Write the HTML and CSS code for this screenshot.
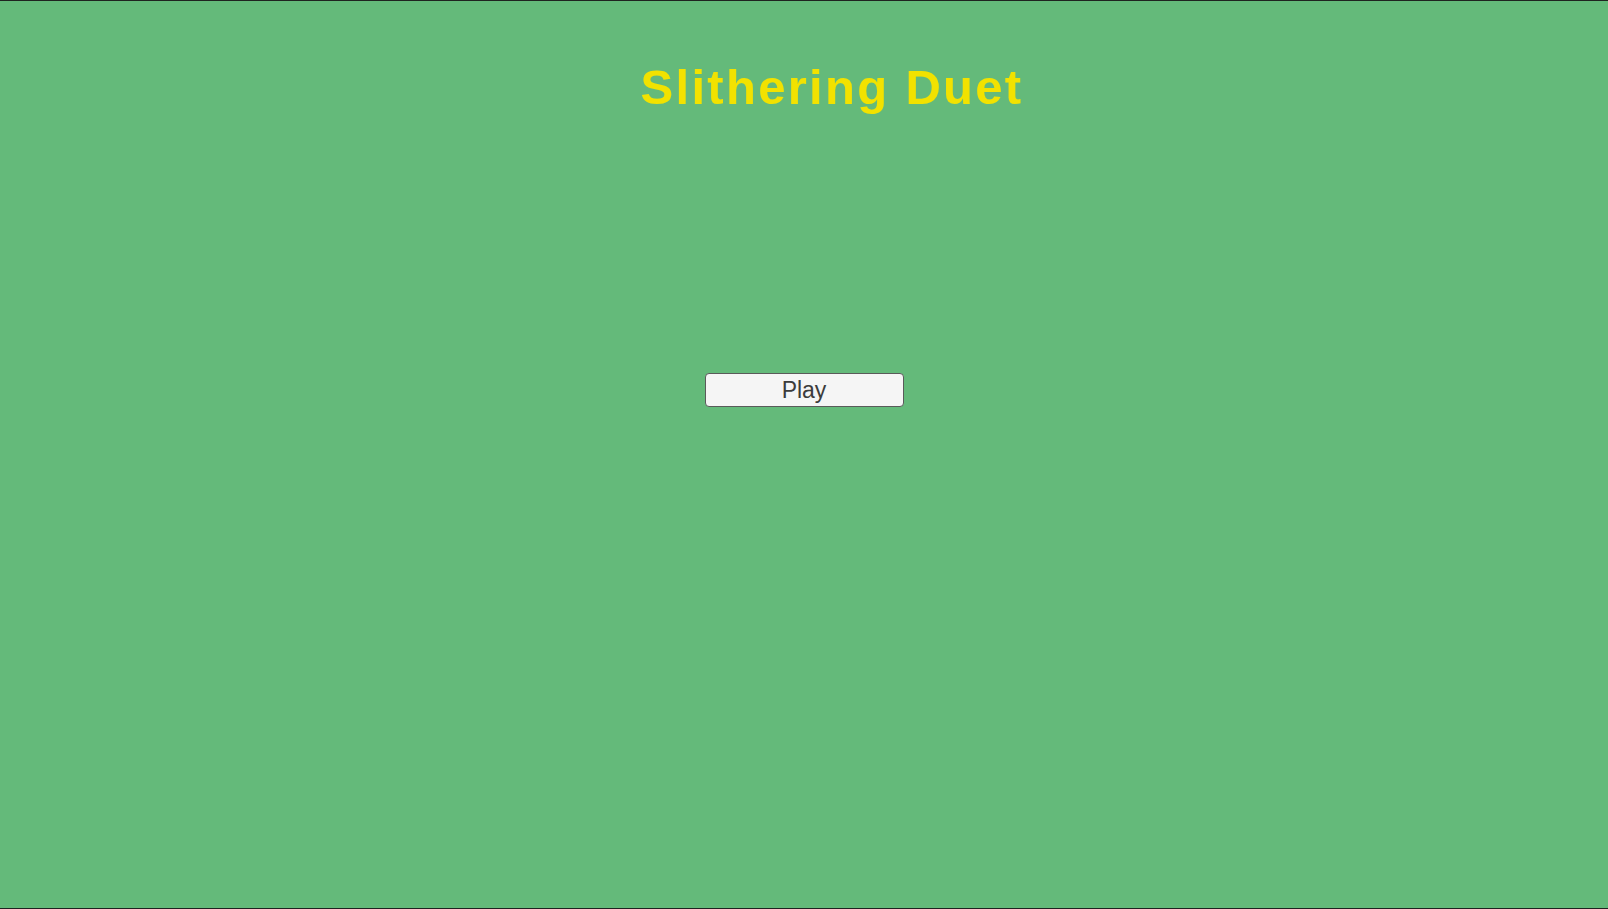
FILE: index.html
```html
<!DOCTYPE html>
<html lang="en">
<head>
<meta charset="utf-8">
<title>Slithering Duet</title>
<link rel="stylesheet" href="styles.css">
</head>
<body>
<main class="screen">
  <h1 class="title">Slithering Duet</h1>
  <button class="play-btn" type="button">Play</button>
</main>
</body>
</html>
```

FILE: styles.css
```css
html, body {
  margin: 0;
  padding: 0;
}
body {
  width: 1608px;
  height: 909px;
  box-sizing: border-box;
  border-top: 1px solid #1f2320;
  border-bottom: 1px solid #1f2320;
  background: #64ba7a;
  overflow: hidden;
  font-family: "Liberation Sans", Arial, sans-serif;
}
.screen {
  height: 907px;
  display: flex;
  flex-direction: column;
  align-items: center;
  padding-top: 62px;
  box-sizing: border-box;
}
.title {
  margin: 0;
  align-self: stretch;
  padding-left: 56px;
  text-align: center;
  font-size: 49px;
  line-height: 49px;
  font-weight: bold;
  letter-spacing: 2.3px;
  color: #f2e200;
}
.play-btn {
  margin-top: 261px;
  width: 199px;
  height: 34px;
  box-sizing: border-box;
  background: #f5f5f5;
  border: 1px solid #5a5a5a;
  border-radius: 4px;
  font-family: "Liberation Sans", Arial, sans-serif;
  font-size: 23px;
  line-height: 32px;
  color: #3c3c3c;
  padding: 0;
  text-align: center;
}
```
